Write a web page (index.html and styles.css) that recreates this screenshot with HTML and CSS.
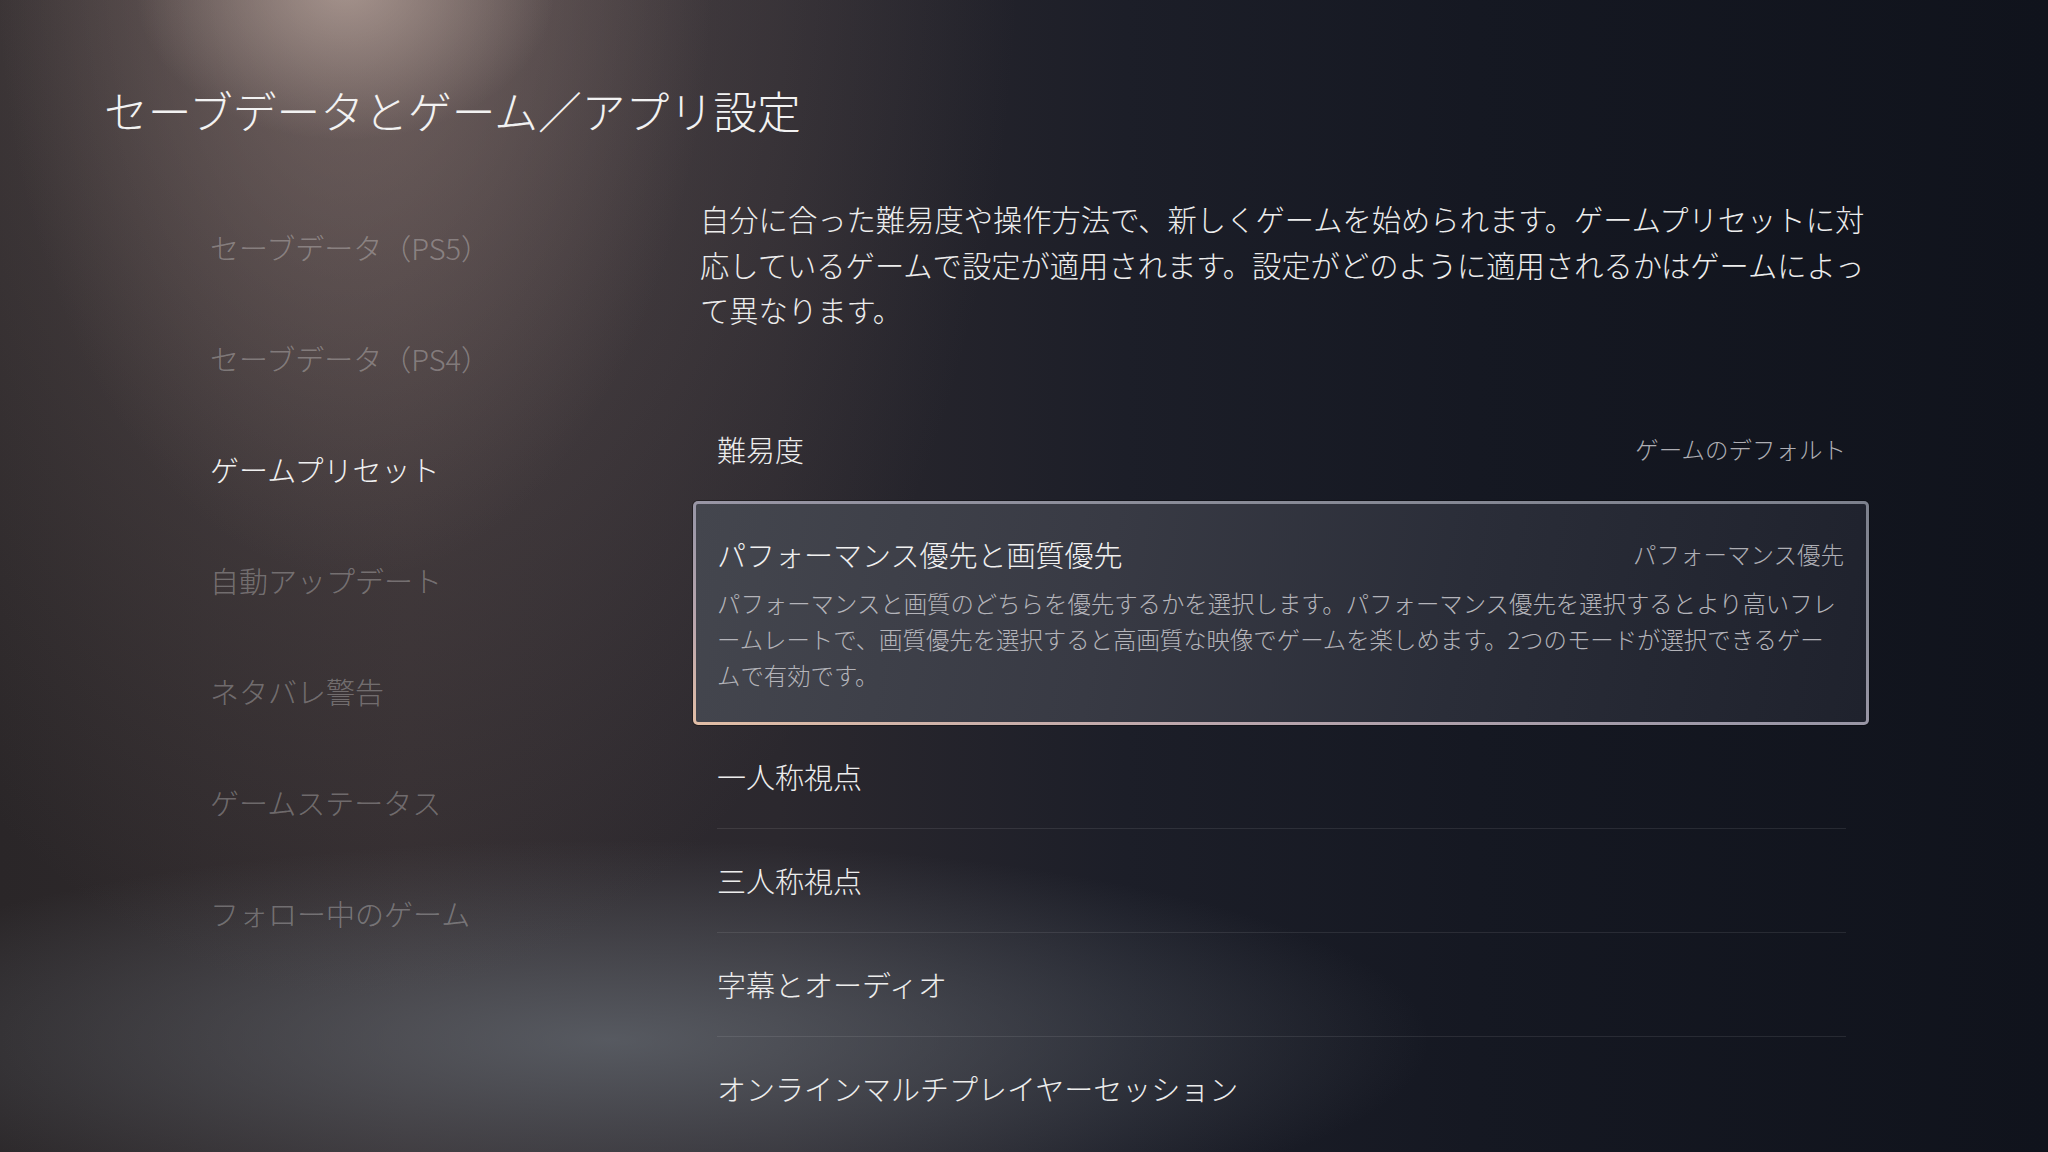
FILE: index.html
```html
<!DOCTYPE html>
<html lang="ja">
<head>
<meta charset="utf-8">
<title>セーブデータとゲーム／アプリ設定</title>
<link rel="stylesheet" href="styles.css">
</head>
<body>
<div class="screen">
  <h1 class="page-title">セーブデータとゲーム／アプリ設定</h1>
  <div class="layout">
    <nav class="side-nav">
      <div class="nav-item">セーブデータ（PS5）</div>
      <div class="nav-item">セーブデータ（PS4）</div>
      <div class="nav-item is-active">ゲームプリセット</div>
      <div class="nav-item">自動アップデート</div>
      <div class="nav-item">ネタバレ警告</div>
      <div class="nav-item">ゲームステータス</div>
      <div class="nav-item">フォロー中のゲーム</div>
    </nav>
    <main class="content">
      <p class="intro">自分に合った難易度や操作方法で、新しくゲームを始められます。ゲームプリセットに対応しているゲームで設定が適用されます。設定がどのように適用されるかはゲームによって異なります。</p>
      <div class="settings">
        <div class="row">
          <span class="row-label">難易度</span>
          <span class="row-value">ゲームのデフォルト</span>
        </div>
        <div class="card">
          <div class="card-head">
            <span class="card-label">パフォーマンス優先と画質優先</span>
            <span class="row-value">パフォーマンス優先</span>
          </div>
          <p class="card-desc">パフォーマンスと画質のどちらを優先するかを選択します。パフォーマンス優先を選択するとより高いフレ<br>ームレートで、画質優先を選択すると高画質な映像でゲームを楽しめます。2つのモードが選択できるゲー<br>ムで有効です。</p>
        </div>
        <div class="row">
          <span class="row-label">一人称視点</span>
        </div>
        <div class="row">
          <span class="row-label">三人称視点</span>
        </div>
        <div class="row">
          <span class="row-label">字幕とオーディオ</span>
        </div>
        <div class="row">
          <span class="row-label">オンラインマルチプレイヤーセッション</span>
        </div>
      </div>
    </main>
  </div>
</div>
</body>
</html>
```

FILE: styles.css
```css
* { box-sizing: border-box; }

html, body {
  margin: 0;
  padding: 0;
}

body {
  width: 2048px;
  height: 1152px;
  overflow: hidden;
  font-family: "Noto Sans CJK JP", "Noto Sans", sans-serif;
  font-weight: 300;
  color: #ececec;
  background:
    radial-gradient(ellipse 210px 150px at 345px -10px, rgba(205, 185, 175, 0.55), rgba(205, 185, 175, 0) 100%),
    radial-gradient(ellipse 360px 640px at 355px -60px, rgba(150, 128, 122, 0.5), rgba(150, 128, 122, 0) 100%),
    radial-gradient(ellipse 660px 1080px at 360px -80px, rgba(112, 98, 98, 0.55), rgba(112, 98, 98, 0) 100%),
    radial-gradient(ellipse 820px 200px at 610px 1040px, rgba(104, 110, 118, 0.7), rgba(104, 110, 118, 0) 100%),
    linear-gradient(90deg, #2a2628 0%, #322c2f 20%, #2b282e 38%, #1c1e28 55%, #151822 72%, #10131c 100%);
}

.screen {
  width: 2048px;
  height: 1152px;
  display: flex;
  flex-direction: column;
}

.page-title {
  margin: 0;
  padding: 83px 0 0 104px;
  font-size: 43.8px;
  font-weight: 300;
  line-height: 54px;
  color: #f2f2f2;
  letter-spacing: 0;
}

.layout {
  display: flex;
  padding-top: 55px;
}

.side-nav {
  width: 693px;
  padding-left: 210px;
  display: flex;
  flex-direction: column;
}

.nav-item {
  height: 111px;
  line-height: 111px;
  font-size: 29px;
  color: rgba(255, 255, 255, 0.3);
  white-space: nowrap;
}

.nav-item.is-active {
  color: #f0f0f0;
}

.content {
  width: 1176px;
  display: flex;
  flex-direction: column;
  padding-top: 4px;
}

.intro {
  margin: 0 0 0 7px;
  width: 1178px;
  font-size: 29.3px;
  line-height: 45.5px;
  color: #ededed;
}

.settings {
  display: flex;
  flex-direction: column;
  padding-top: 65px;
}

.row {
  margin: 0 23px 0 24px;
  height: 103px;
  display: flex;
  align-items: center;
  justify-content: space-between;
}

.row + .row {
  height: 104px;
  border-top: 1px solid rgba(255, 255, 255, 0.09);
}

.row-label {
  font-size: 29px;
  color: #ededed;
  white-space: nowrap;
}

.row-value {
  font-size: 23.5px;
  color: #aeaeb4;
  white-space: nowrap;
}

.card {
  height: 224px;
  border: 3px solid transparent;
  border-radius: 5px;
  padding: 30px 22px 0 21px;
  background:
    linear-gradient(100deg, #44464e 0%, #383a44 35%, #2a2d38 65%, #1f222d 100%) padding-box,
    linear-gradient(to top right, #e2bea6 0%, #bba6ad 22%, #9c98a8 45%, #8a8c98 70%, #7c808c 100%) border-box;
  box-shadow: 0 0 0 1px rgba(0, 0, 0, 0.35);
}

.card-head {
  display: flex;
  align-items: center;
  justify-content: space-between;
  height: 40px;
}

.card-label {
  font-size: 29px;
  color: #f0f0f0;
  white-space: nowrap;
}

.card-desc {
  margin: 11px 0 0;
  font-size: 23.4px;
  line-height: 36px;
  color: #b4b4ba;
  white-space: nowrap;
}
```
